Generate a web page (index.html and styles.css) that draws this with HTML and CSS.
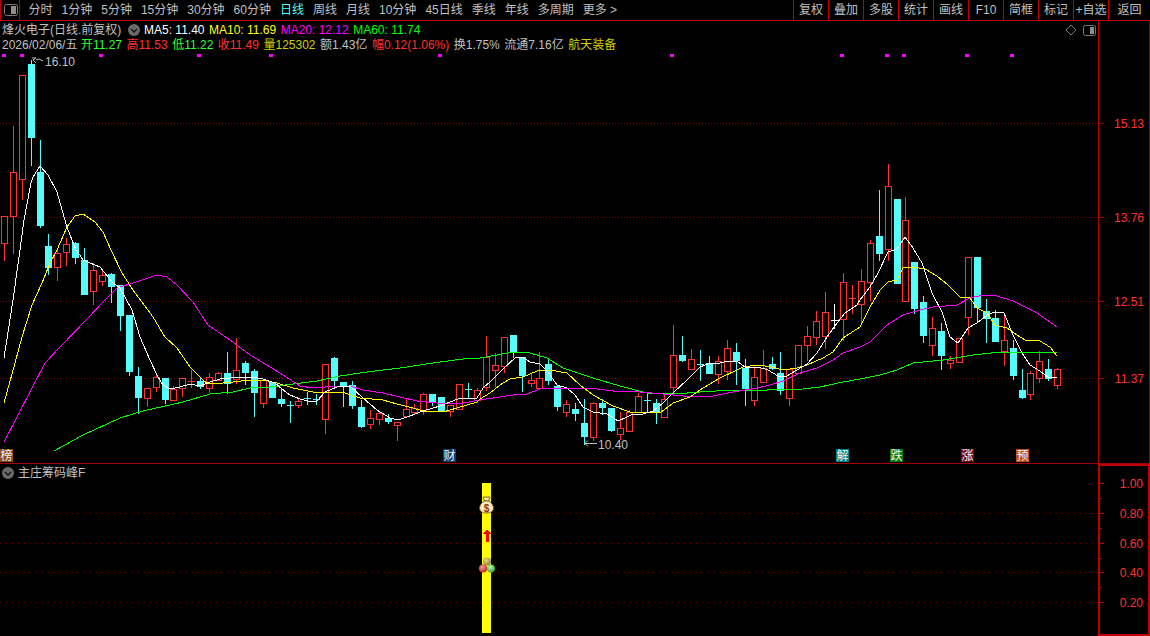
FILE: index.html
```html
<!DOCTYPE html>
<html lang="zh-CN">
<head>
<meta charset="utf-8">
<title>烽火电子 日线</title>
<link rel="stylesheet" href="styles.css">
</head>
<body>
<div class="app">
  <header class="toolbar">
    <div class="tool-icon">
      <svg width="14" height="12" viewBox="0 0 14 12"><rect x="0.5" y="0.5" width="13" height="11" rx="2" fill="none" stroke="#7a7a7a"/><rect x="7" y="2" width="5" height="8" fill="#8f8f8f"/></svg>
    </div>
    <nav class="periods">
      <span>分时</span><span>1分钟</span><span>5分钟</span><span>15分钟</span><span>30分钟</span><span>60分钟</span><span class="active">日线</span><span>周线</span><span>月线</span><span>10分钟</span><span>45日线</span><span>季线</span><span>年线</span><span>多周期</span><span>更多 &gt;</span>
    </nav>
    <nav class="actions">
      <span>复权</span><span>叠加</span><span>多股</span><span>统计</span><span>画线</span><span>F10</span><span>简框</span><span>标记</span><span>+自选</span><span class="last">返回</span>
    </nav>
  </header>

  <section class="pane price-pane">
    <div class="plot">
      <svg id="price" class="canvas" width="1098" height="442"></svg>
      <div class="legend">
        <div class="legend-row row-ma">
          <span class="name">烽火电子(日线.前复权)</span>
          <svg class="chev" width="12" height="12" viewBox="0 0 12 12"><circle cx="6" cy="6" r="6" fill="#6a6a6a"/><path d="M3 5l3 3 3-3" fill="none" stroke="#111" stroke-width="1.3"/></svg>
          <span class="white">MA5: 11.40</span>
          <span class="yellow">MA10: 11.69</span>
          <span class="magenta">MA20: 12.12</span>
          <span class="green">MA60: 11.74</span>
        </div>
        <div class="legend-row row-quote">
          <span class="gray date">2026/02/06/五</span>
          <span class="up">开11.27</span>
          <span class="red">高11.53</span>
          <span class="up">低11.22</span>
          <span class="red">收11.49</span>
          <span class="olive">量125302</span>
          <span class="gray">额1.43亿</span>
          <span class="red">幅0.12(1.06%)</span>
          <span class="gray">换1.75%</span>
          <span class="gray">流通7.16亿</span>
          <span class="olive">航天装备</span>
        </div>
      </div>
      <div class="pane-tools">
        <svg width="12" height="12" viewBox="0 0 12 12"><path d="M6 1l5 5-5 5-5-5z" fill="none" stroke="#777"/></svg>
        <svg width="13" height="11" viewBox="0 0 13 11"><rect x="0.5" y="0.5" width="12" height="10" rx="2" fill="none" stroke="#7a7a7a"/><rect x="7" y="2" width="4" height="7" fill="#8f8f8f"/></svg>
      </div>
    </div>
    <svg id="price-axis" class="axis axis-top" width="51" height="442"></svg>
  </section>

  <section class="pane volume-pane">
    <div class="plot">
      <svg id="chip" class="canvas" width="1098" height="171">
        <defs>
          <radialGradient id="ball-red" cx="40%" cy="35%" r="70%"><stop offset="0" stop-color="#ff9a9a"/><stop offset="1" stop-color="#b02020"/></radialGradient>
          <radialGradient id="ball-green" cx="40%" cy="35%" r="70%"><stop offset="0" stop-color="#b8ffb0"/><stop offset="1" stop-color="#2f9a2f"/></radialGradient>
          <radialGradient id="ball-gold" cx="40%" cy="35%" r="70%"><stop offset="0" stop-color="#e8d890"/><stop offset="1" stop-color="#8f7a30"/></radialGradient>
        </defs>
        <g id="chip-grid"></g>
        <rect x="482" y="19" width="9" height="150" fill="#ffff00"/>
        <g class="smooth">
          <path d="M483 33h7l-1.500 4h-4z" fill="#f6e7a8" stroke="#6b4a10" stroke-width="0.8"/>
          <path d="M484 37h5c3 2 4.500 5 4.500 7 0 3-2.500 5-7 5s-7-2-7-5c0-2 1.500-5 4.500-7z" fill="#f8ecb8" stroke="#6b4a10" stroke-width="0.8"/>
          <text class="bag-sign" x="486.500" y="47.500">$</text>
        </g>
        <path d="M487 66l4.500 4h-3v8h-3v-8h-3z" fill="#ff0000"/>
        <g class="smooth">
          <circle cx="487" cy="97.500" r="4" fill="url(#ball-gold)"/>
          <circle cx="483" cy="104.500" r="4" fill="url(#ball-red)"/>
          <circle cx="491" cy="104.500" r="4" fill="url(#ball-green)"/>
        </g>
      </svg>
      <div class="legend legend-chip">
        <svg class="chev" width="12" height="12" viewBox="0 0 12 12"><circle cx="6" cy="6" r="6" fill="#6a6a6a"/><path d="M3 5l3 3 3-3" fill="none" stroke="#111" stroke-width="1.3"/></svg>
        <span class="gray">主庄筹码峰F</span>
      </div>
    </div>
    <svg id="chip-axis" class="axis axis-bottom" width="52" height="172"></svg>
  </section>
</div>
<script src="chart.js"></script>
</body>
</html>
```
FILE: styles.css
```css
* { box-sizing: border-box; }
html, body { margin: 0; height: 100%; background: #000; overflow: hidden; }
body {
  font-family: "Liberation Sans", "Noto Sans CJK SC", sans-serif;
  font-size: 12px;
  color: #c0c0c0;
}
.app { display: flex; flex-direction: column; width: 1150px; height: 636px; }

.toolbar {
  display: flex;
  height: 21px;
  flex: none;
  border-bottom: 1px solid #c00000;
  border-left: 1px solid #c00000;
  line-height: 21px;
}
.tool-icon {
  width: 19px;
  border-right: 1px solid #c00000;
  display: flex;
  align-items: center;
  padding-left: 3px;
}
.periods { display: flex; gap: 9px; padding-left: 8.500px; flex: 1; }
.periods .active { color: #54fcfc; }
.actions { display: flex; }
.actions span {
  width: 35px;
  text-align: center;
  border-left: 1px solid #c00000;
  white-space: nowrap;
}
.actions .last { width: 42px; }

.pane { display: flex; flex: none; }
.price-pane { height: 442px; }
.volume-pane { height: 173px; border-top: 1px solid #a00000; }
.plot { position: relative; width: 1098px; }
.canvas { display: block; shape-rendering: crispEdges; }
.smooth { shape-rendering: auto; }
.axis { display: block; flex: none; background: #000; }
.axis-top { border-left: 1px solid #c00000; border-right: 1px solid #900000; width: 52px; }
.axis-bottom { border: 2px solid #c00000; width: 52px; height: 172px; }

.legend { position: absolute; left: 2px; top: 2px; line-height: 14px; }
.legend-row { display: flex; white-space: nowrap; align-items: center; }
.row-ma { height: 14px; }
.row-ma .name { width: 124px; }
.row-ma .chev { margin: 0 4px 0 2px; }
.row-ma > span + span { margin-left: 4.500px; }
.row-quote { margin-top: 1px; gap: 4.500px; }
.row-quote .date { margin-right: -1px; }
.legend-chip { display: flex; align-items: center; gap: 4px; }

.pane-tools {
  position: absolute;
  right: 2px;
  top: 3px;
  display: flex;
  gap: 6px;
  align-items: center;
}

.gray { color: #c0c0c0; }
.white { color: #fff; }
.yellow { color: #ffff00; }
.magenta { color: #ff00ff; }
.green { color: #00ff00; }
.up { color: #33ff33; }
.red { color: #ff3232; }
.olive { color: #d0d000; }

svg text {
  font-family: "Liberation Sans", "Noto Sans CJK SC", sans-serif;
  font-size: 12px;
}
.t-peak { fill: #c0c0c0; }
.t-axis { fill: #ff3232; text-anchor: end; }
.t-badge { fill: #f4f4f4; text-anchor: middle; }
.bag-sign { fill: #8a3a10; font-size: 10px; font-weight: bold; text-anchor: middle; }
.t-arrow { fill: none; stroke: #c0c0c0; shape-rendering: auto; }
```
FILE: chart.js
```js
var NS = 'http://www.w3.org/2000/svg';
var RED = '#ff3232', CYAN = '#54fcfc';

function el(parent, name, attrs, text) {
  var n = document.createElementNS(NS, name);
  for (var k in attrs) n.setAttribute(k, attrs[k]);
  if (text) n.textContent = text;
  parent.appendChild(n);
  return n;
}

// [high, bodyTop, bodyBottom, low, colour]  r: up, c: down, w: flat
var candles = [
  [216,216,243,260,'r'],[126,172,216,253,'r'],[75,75,179,199,'r'],[60,64,137,165,'c'],[140,172,225,227,'c'],
  [234,246,267,274,'c'],[250,253,267,280,'r'],[238,244,252,265,'r'],[242,243,257,263,'c'],[248,260,294,294,'c'],
  [263,270,291,304,'r'],[271,275,281,285,'r'],[273,274,286,302,'c'],[285,285,315,330,'c'],[315,315,371,375,'c'],
  [367,376,397,413,'c'],[388,388,398,406,'r'],[374,377,387,391,'r'],[378,378,399,403,'c'],[386,389,400,400,'r'],
  [378,378,388,396,'r'],[370,381,381,387,'r'],[378,381,386,388,'c'],[373,377,388,392,'r'],[372,373,380,380,'r'],
  [352,373,383,393,'c'],[338,370,379,383,'r'],[361,363,372,384,'c'],[369,371,392,416,'c'],[380,380,403,407,'r'],
  [382,382,397,397,'c'],[388,399,403,406,'c'],[401,405,405,422,'c'],[398,401,405,407,'r'],[392,398,398,404,'c'],
  [394,399,399,404,'c'],[364,364,419,433,'r'],[357,358,380,387,'c'],[382,382,386,406,'c'],[381,385,405,408,'c'],
  [400,407,426,427,'c'],[410,418,424,428,'r'],[411,413,419,424,'r'],[414,418,421,423,'c'],[422,422,425,440,'r'],
  [398,409,416,416,'r'],[404,408,412,414,'r'],[393,394,411,414,'r'],[394,394,401,405,'c'],[397,397,410,410,'c'],
  [405,405,411,416,'r'],[384,384,409,409,'r'],[383,389,389,397,'c'],[388,390,400,402,'r'],[336,357,387,390,'r'],
  [353,365,370,386,'r'],[337,337,366,372,'r'],[335,335,352,357,'c'],[357,357,375,391,'c'],[373,380,383,386,'r'],
  [352,378,388,388,'r'],[360,364,380,384,'c'],[386,386,406,410,'c'],[400,404,412,416,'r'],[403,409,413,420,'c'],
  [399,423,436,444,'c'],[402,403,437,440,'r'],[399,403,407,414,'c'],[408,408,430,431,'c'],[412,428,434,439,'r'],
  [410,412,431,431,'r'],[393,396,412,412,'r'],[394,400,400,412,'c'],[399,403,411,423,'c'],[395,399,417,417,'r'],
  [325,355,387,395,'r'],[336,355,360,361,'c'],[349,359,369,369,'r'],[350,364,364,380,'c'],[356,363,373,373,'c'],
  [356,361,374,383,'r'],[340,348,371,379,'r'],[343,352,360,384,'c'],[359,368,388,405,'c'],[365,377,400,405,'r'],
  [350,368,382,382,'r'],[357,364,368,369,'c'],[352,373,390,394,'c'],[369,369,398,405,'r'],[345,345,373,373,'r'],
  [326,336,345,360,'r'],[311,321,337,344,'r'],[292,312,336,348,'r'],[304,320,320,328,'w'],[273,282,319,340,'r'],
  [285,298,298,313,'r'],[269,281,304,322,'r'],[240,243,282,300,'r'],[190,236,253,260,'c'],[164,186,249,260,'r'],
  [199,199,283,283,'c'],[197,220,301,301,'r'],[262,262,308,313,'c'],[296,302,335,342,'c'],[317,328,345,355,'r'],
  [323,331,355,369,'c'],[356,360,363,368,'r'],[338,338,362,362,'r'],[257,257,317,334,'r'],[257,257,307,321,'c'],
  [299,311,318,342,'c'],[310,318,341,341,'c'],[314,340,351,365,'r'],[340,348,375,379,'c'],[369,390,397,398,'c'],
  [371,373,394,399,'r'],[351,361,378,382,'r'],[359,369,378,380,'c'],[368,369,385,388,'r']
];

var steps = [5,19,33,46,60,74,87,101,115];
function leftOf(i) {
  var x = 1 + 9 * i;
  steps.forEach(function (s) { if (i >= s) x -= 1; });
  return x;
}

var lines = {
  '#ffffff': [4,358,13,300,20,250,24,220,31,183,33,177,40,166,48,175,57,192,63,213,67,227,72,240,76,250,80,255,83,260,90,263,100,267,113,283,120,288,132,310,140,337,150,360,158,377,163,385,170,389,180,387,190,384,200,386,210,382,220,379,230,378,240,377,250,377,263,379,275,383,282,389,290,395,300,399,308,401,317,401,325,392,337,387,350,386,363,398,377,410,390,418,398,420,410,416,423,411,440,406,450,402,458,399,477,398,483,388,490,382,495,377,505,367,515,358,522,357,530,362,540,364,548,372,557,385,567,388,575,395,583,407,593,412,607,414,618,421,627,417,633,414,643,414,653,411,663,403,673,393,687,380,700,367,710,363,717,364,727,361,737,361,745,367,758,367,768,370,778,376,785,377,797,370,807,364,817,353,827,337,837,323,845,313,857,305,860,300,870,287,878,273,888,252,897,249,905,237,913,248,922,263,932,293,942,312,950,337,958,343,968,328,977,323,987,315,995,312,1004,313,1013,335,1022,353,1030,365,1040,371,1048,377,1057,377],
  '#ffff00': [4,403,15,363,22,337,32,305,42,283,50,263,57,250,67,227,75,216,83,214,95,222,103,232,111,250,122,273,133,290,153,317,165,337,177,348,190,367,203,380,208,384,223,383,233,382,250,380,263,380,277,383,293,388,313,392,330,392,345,393,360,398,383,400,397,404,413,408,423,411,443,412,457,408,477,402,480,399,490,393,500,385,510,379,523,377,537,371,550,370,567,373,580,385,593,395,613,406,630,412,660,413,673,403,690,397,703,388,720,378,737,370,743,367,757,365,772,367,783,370,797,368,807,365,823,358,833,352,843,338,860,327,870,307,880,290,888,282,897,280,903,268,913,267,925,269,937,276,948,285,960,297,970,298,977,308,987,313,995,325,1007,328,1017,335,1025,340,1040,341,1050,347,1057,356],
  '#ff00ff': [4,442,17,417,32,388,45,363,60,347,88,318,103,302,117,288,133,283,157,275,167,277,177,285,193,302,208,325,233,342,250,355,267,365,283,375,300,386,313,388,337,386,350,386,363,390,383,393,400,397,417,401,437,403,463,403,480,400,493,398,513,395,527,394,540,389,547,388,580,388,597,389,613,391,640,392,663,394,693,397,713,396,733,392,757,388,770,385,783,381,800,373,817,368,833,360,843,353,860,347,870,342,887,325,903,315,920,310,933,307,957,305,970,298,983,295,997,296,1013,301,1037,313,1057,327],
  '#00ff00': [54,451,83,435,120,418,143,411,183,402,210,394,233,392,250,388,270,387,293,384,317,381,340,376,367,372,400,368,433,363,463,359,480,358,497,355,513,352,530,353,547,358,563,368,593,378,620,386,647,393,667,394,687,393,700,392,733,390,767,390,803,389,820,387,843,382,860,379,880,375,897,370,913,363,943,360,973,355,1000,352,1027,352,1057,352]
};

function drawPrice() {
  var svg = document.getElementById('price');
  var OFFSET = 21;
  var y = function (v) { return v - OFFSET; };

  [123, 217, 301, 378].forEach(function (g) {
    el(svg, 'line', { x1: 0, x2: 1098, y1: y(g) + 0.5, y2: y(g) + 0.5, stroke: '#800000', 'stroke-dasharray': '1 2' });
  });

  [4, 22, 101, 199, 271, 440, 672, 842, 887, 904, 967, 1012].forEach(function (x) {
    el(svg, 'rect', { x: x - 2, y: y(54), width: 4, height: 3, fill: '#ff00ff' });
  });

  candles.forEach(function (c, i) {
    var x = leftOf(i), mid = x + 3;
    var hi = y(c[0]), top = y(c[1]), bot = y(c[2]), lo = y(c[3]);
    var col = c[4] === 'r' ? RED : c[4] === 'w' ? '#ffffff' : CYAN;
    var wick = function (a, b) {
      if (b > a) el(svg, 'rect', { x: mid, y: a, width: 1, height: b - a, fill: col });
    };
    if (top === bot) {
      wick(hi, lo + 1);
      el(svg, 'rect', { x: x, y: top, width: 7, height: 1, fill: col });
    } else if (c[4] === 'r') {
      wick(hi, top);
      wick(bot + 1, lo + 1);
      el(svg, 'rect', { x: x + 0.5, y: top + 0.5, width: 6, height: bot - top, fill: '#000', stroke: col });
    } else {
      wick(hi, lo + 1);
      el(svg, 'rect', { x: x, y: top, width: 7, height: bot - top + 1, fill: col });
    }
  });

  Object.keys(lines).reverse().forEach(function (col) {
    var p = lines[col], pts = [];
    for (var i = 0; i < p.length; i += 2) pts.push(p[i] + ',' + y(p[i + 1]));
    el(svg, 'polyline', { points: pts.join(' '), fill: 'none', stroke: col, 'stroke-width': 1 });
  });

  // extreme value markers
  el(svg, 'path', { 'class': 't-arrow', d: 'M32 ' + y(58) + 'h4l-3 2 3 3M36 ' + y(60) + 'l3-1 4 2' });
  el(svg, 'text', { 'class': 't-peak', x: 45, y: y(66) }, '16.10');
  el(svg, 'path', { 'class': 't-arrow', d: 'M597 ' + y(443.5) + 'h-12l3-3M585 ' + y(443.5) + 'l3 3' });
  el(svg, 'text', { 'class': 't-peak', x: 598, y: y(449) }, '10.40');

  var badges = [
    [0, '#8b4a14', '榜'], [443, '#0c3d6e', '财'], [836, '#008080', '解'],
    [890, '#047a0a', '跌'], [961, '#7d0a0a', '涨'], [1016, '#b84c10', '预']
  ];
  badges.forEach(function (b) {
    el(svg, 'rect', { x: b[0], y: y(449), width: 13, height: 13, fill: b[1] });
    el(svg, 'text', { 'class': 't-badge', x: b[0] + 6.5, y: y(460) }, b[2]);
  });
}

function drawPriceAxis() {
  var svg = document.getElementById('price-axis');
  [[15.13, 123], [13.76, 217], [12.51, 301], [11.37, 378]].forEach(function (a) {
    var yy = a[1] - 21;
    el(svg, 'rect', { x: 0, y: yy, width: 5, height: 1, fill: '#a00000' });
    el(svg, 'text', { 'class': 't-axis', x: 45, y: yy + 5 }, a[0].toFixed(2));
  });
}

function drawChip() {
  var grid = document.getElementById('chip-grid');
  [513, 543, 572, 602].forEach(function (g) {
    el(grid, 'line', { x1: 0, x2: 1095, y1: g - 464 + 0.5, y2: g - 464 + 0.5, stroke: '#800000', 'stroke-dasharray': '1 5' });
  });
  var svg = document.getElementById('chip-axis');
  [[1.00, 483], [0.80, 513], [0.60, 543], [0.40, 572], [0.20, 602]].forEach(function (a) {
    var yy = a[1] - 466;
    el(svg, 'rect', { x: 0, y: yy, width: 4, height: 1, fill: '#c00000' });
    el(svg, 'text', { 'class': 't-axis', x: 43, y: yy + 5 }, a[0].toFixed(2));
  });
  [498, 528, 558, 587].forEach(function (m) {
    el(svg, 'rect', { x: 0, y: m - 466, width: 2, height: 1, fill: '#c00000' });
  });
}

drawPrice();
drawPriceAxis();
drawChip();
```
